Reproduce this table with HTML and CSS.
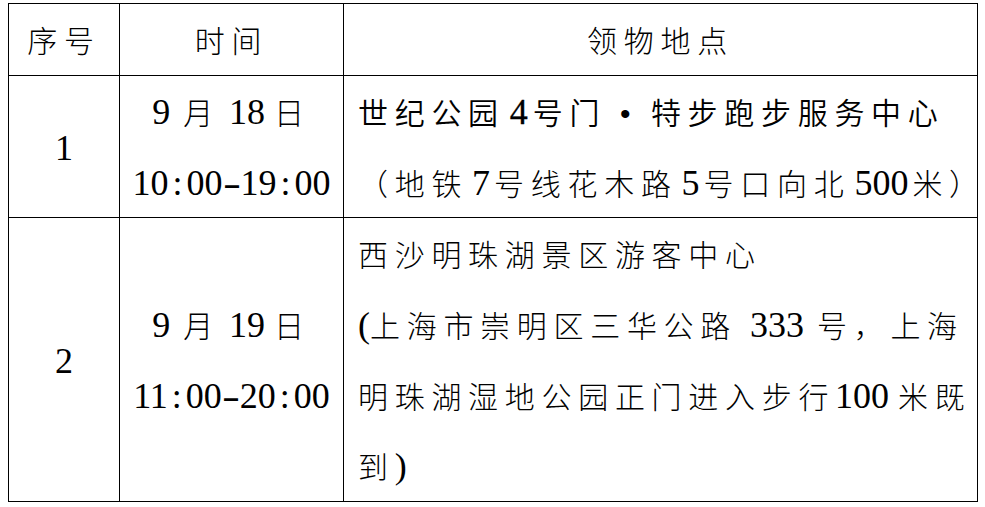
FILE: index.html
```html
<!DOCTYPE html>
<html lang="zh-CN">
<head>
<meta charset="utf-8">
<title>领物地点</title>
<link rel="stylesheet" href="styles.css">
</head>
<body>
<div class="page">
  <table class="sched">
    <colgroup>
      <col class="c-no">
      <col class="c-time">
      <col class="c-place">
    </colgroup>
    <thead>
      <tr>
        <th class="ctr"><div class="ln ln-h">序号</div></th>
        <th class="ctr"><div class="ln ln-h">时间</div></th>
        <th class="ctr"><div class="ln ln-h">领物地点</div></th>
      </tr>
    </thead>
    <tbody>
      <tr>
        <td class="ctr"><span class="en">1</span></td>
        <td class="ctr">
          <div class="ln ln-1"><span class="en gap-r">9 </span>月<span class="en"> 18 </span>日</div>
          <div class="ln ln-1"><span class="en">10<span class="p">:</span>00<span class="p dash">-</span>19<span class="p">:</span>00</span></div>
        </td>
        <td class="place">
          <div class="ln ln-1 strong">世纪公园<span class="en pad">4</span>号门<span class="dot">•</span>特步跑步服务中心</div>
          <div class="ln ln-1">（地铁<span class="en pad-s">7</span>号线花木路<span class="en pad-s">5</span>号口向北<span class="en pad-s">500</span>米）</div>
        </td>
      </tr>
      <tr>
        <td class="ctr"><span class="en">2</span></td>
        <td class="ctr">
          <div class="ln ln-2"><span class="en gap-r">9 </span>月<span class="en"> 19 </span>日</div>
          <div class="ln ln-2"><span class="en">11<span class="p">:</span>00<span class="p dash">-</span>20<span class="p">:</span>00</span></div>
        </td>
        <td class="place">
          <div class="ln ln-2">西沙明珠湖景区游客中心</div>
          <div class="ln ln-2"><span class="en">(</span>上海市崇明区三华公路<span class="en pad-s"> 333 </span>号，上海</div>
          <div class="ln ln-2">明珠湖湿地公园正门进入步行<span class="en">100 </span>米既</div>
          <div class="ln ln-2">到<span class="en">)</span></div>
        </td>
      </tr>
    </tbody>
  </table>
</div>
</body>
</html>
```

FILE: styles.css
```css
html, body {
  margin: 0;
  padding: 0;
  background: #ffffff;
}

.page {
  padding: 3px 0 0 8px;
}

.sched {
  border-collapse: collapse;
  table-layout: fixed;
  width: 969px;
  color: #000000;
  font-family: "Noto Sans CJK SC", sans-serif;
  font-weight: 300;
  font-size: 30px;
  letter-spacing: 6.7px;
}

.c-no { width: 111px; }
.c-time { width: 224px; }
.c-place { width: 634px; }

.sched th,
.sched td {
  border: 1px solid #000000;
  padding: 0;
  vertical-align: middle;
  font-weight: 300;
  white-space: nowrap;
}

.ctr {
  text-align: center;
}

.place {
  text-align: left;
  padding-left: 14px !important;
}

.ln {
  display: block;
}

.ln-h { line-height: 71px; }
.ln-1 { line-height: 70.5px; }
.ln-2 { line-height: 70.75px; }

.sched .strong {
  font-weight: 350;
}

.sched .en {
  font-family: "Liberation Serif", "Times New Roman", serif;
  font-size: 36px;
  font-weight: normal;
  letter-spacing: 0;
  line-height: 1;
}

.sched .strong .en {
  -webkit-text-stroke: 0.3px #000000;
}

.sched .pad {
  padding: 0 5px;
}

.sched .pad-s {
  padding: 0 4px;
}

.sched .gap-r {
  padding-right: 4px;
}

.p {
  display: inline-block;
  width: 18px;
  text-align: center;
  line-height: 1;
}

.dash {
  transform: scaleX(1.5);
}

.dot {
  display: inline-block;
  width: 38px;
  margin-right: 6.7px;
  text-align: center;
  font-family: "DejaVu Sans", sans-serif;
  font-size: 30px;
  line-height: 1;
  letter-spacing: 0;
}
```
